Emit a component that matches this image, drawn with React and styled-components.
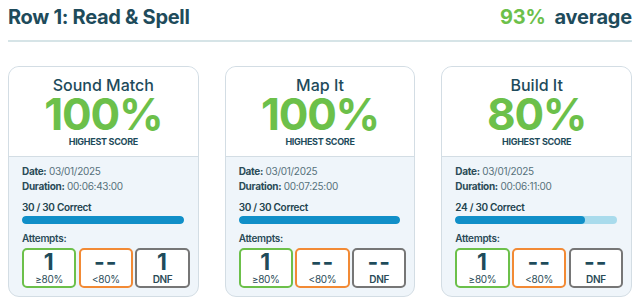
import React from "react";
import styled, { createGlobalStyle } from "styled-components";

const Global = createGlobalStyle`
  html, body { margin: 0; padding: 0; background: #ffffff; }
  body { font-family: Inter, "Noto Sans", "Liberation Sans", sans-serif; }
`;

const Page = styled.div`
  padding: 0 3px 0 8px;
  width: 624px;
`;

const Header = styled.header`
  display: flex;
  align-items: baseline;
  justify-content: space-between;
  height: 42px;
  box-sizing: border-box;
  padding-top: 5px;
  border-bottom: 2px solid #d6e4e7;
`;

const Title = styled.h1`
  margin: 0;
  font-size: 20px;
  font-weight: 700;
  color: #1e4b5b;
  letter-spacing: -0.3px;
`;

const Average = styled.div`
  font-size: 20px;
  font-weight: 700;
  color: #1e4b5b;
  letter-spacing: -0.2px;
`;

const AvgPct = styled.span`
  color: #6cc04a;
  margin-right: 9px;
`;

const Grid = styled.div`
  display: grid;
  grid-template-columns: repeat(3, 1fr);
  column-gap: 26px;
  margin-top: 24px;
`;

const Card = styled.section`
  border: 1px solid #d3dde4;
  border-radius: 11px;
  overflow: hidden;
  background: #eff5fa;
  height: 231px;
  box-sizing: border-box;
`;

const Top = styled.div`
  background: #ffffff;
  display: flex;
  flex-direction: column;
  align-items: center;
  height: 90px;
  box-sizing: border-box;
  padding-top: 8px;
  border-bottom: 1px solid #d3dde4;
`;

const Name = styled.div`
  font-size: 16px;
  font-weight: 500;
  color: #1e4b5b;
  line-height: 20px;
`;

const Score = styled.div`
  font-size: 44px;
  font-weight: 700;
  color: #6cc04a;
  line-height: 40px;
  margin-top: -1px;
  letter-spacing: -1.2px;
`;

const ScoreLabel = styled.div`
  font-size: 9px;
  font-weight: 700;
  color: #1e4b5b;
  letter-spacing: -0.3px;
  line-height: 11px;
  margin-top: 2px;
`;

const Bottom = styled.div`
  padding: 7px 8px 0 13px;
  display: flex;
  flex-direction: column;
`;

const Meta = styled.div`
  font-size: 10px;
  line-height: 15px;
  color: #56717b;
  letter-spacing: -0.3px;
`;

const MetaKey = styled.span`
  font-weight: 700;
  color: #2a4b57;
`;

const Correct = styled.div`
  font-size: 10px;
  font-weight: 600;
  color: #22434e;
  letter-spacing: -0.3px;
  margin-top: 6px;
  line-height: 14px;
`;

const Track = styled.div`
  height: 8px;
  border-radius: 4px;
  background: #a9dbec;
  margin: 2px 6px 0 0;
  overflow: hidden;
`;

const Fill = styled.div`
  height: 100%;
  border-radius: 4px;
  background: #118fc8;
`;

const AttemptsLabel = styled.div`
  font-size: 10px;
  font-weight: 600;
  color: #2a4b57;
  letter-spacing: -0.3px;
  margin-top: 7px;
  line-height: 14px;
`;

const Boxes = styled.div`
  display: grid;
  grid-template-columns: repeat(3, 1fr);
  column-gap: 2.5px;
  margin-top: 3px;
`;

const Box = styled.div`
  height: 40px;
  box-sizing: border-box;
  border: 2px solid ${(p) => p.$color};
  border-radius: 5px;
  background: #ffffff;
  display: flex;
  flex-direction: column;
  align-items: center;
`;

const BoxNum = styled.div`
  font-size: 23px;
  font-weight: 700;
  color: #1e4b5b;
  line-height: 24px;
  letter-spacing: 1px;
`;

const BoxLabel = styled.div`
  font-size: 10px;
  color: #2a4b57;
  line-height: 11px;
  letter-spacing: -0.3px;
  font-weight: ${(p) => (p.$bold ? 600 : 400)};
`;

const cards = [
  { name: "Sound Match", score: "100%", date: "03/01/2025", duration: "00:06:43:00", correct: 30, total: 30, a: ["1", "--", "1"] },
  { name: "Map It", score: "100%", date: "03/01/2025", duration: "00:07:25:00", correct: 30, total: 30, a: ["1", "--", "--"] },
  { name: "Build It", score: "80%", date: "03/01/2025", duration: "00:06:11:00", correct: 24, total: 30, a: ["1", "--", "--"] },
];

const boxDefs = [
  { label: "≥80%", color: "#6cc04a" },
  { label: "<80%", color: "#f28a35" },
  { label: "DNF", color: "#767676", bold: true },
];

export default function App() {
  return (
    <Page>
      <Global />
      <Header>
        <Title>Row 1: Read &amp; Spell</Title>
        <Average>
          <AvgPct>93%</AvgPct>average
        </Average>
      </Header>
      <Grid>
        {cards.map((c) => (
          <Card key={c.name}>
            <Top>
              <Name>{c.name}</Name>
              <Score>{c.score}</Score>
              <ScoreLabel>HIGHEST SCORE</ScoreLabel>
            </Top>
            <Bottom>
              <Meta>
                <MetaKey>Date:</MetaKey> {c.date}
              </Meta>
              <Meta>
                <MetaKey>Duration:</MetaKey> {c.duration}
              </Meta>
              <Correct>
                {c.correct} / {c.total} Correct
              </Correct>
              <Track>
                <Fill style={{ width: `${(c.correct / c.total) * 100}%` }} />
              </Track>
              <AttemptsLabel>Attempts:</AttemptsLabel>
              <Boxes>
                {boxDefs.map((b, i) => (
                  <Box key={b.label} $color={b.color}>
                    <BoxNum>{c.a[i]}</BoxNum>
                    <BoxLabel $bold={b.bold}>{b.label}</BoxLabel>
                  </Box>
                ))}
              </Boxes>
            </Bottom>
          </Card>
        ))}
      </Grid>
    </Page>
  );
}
